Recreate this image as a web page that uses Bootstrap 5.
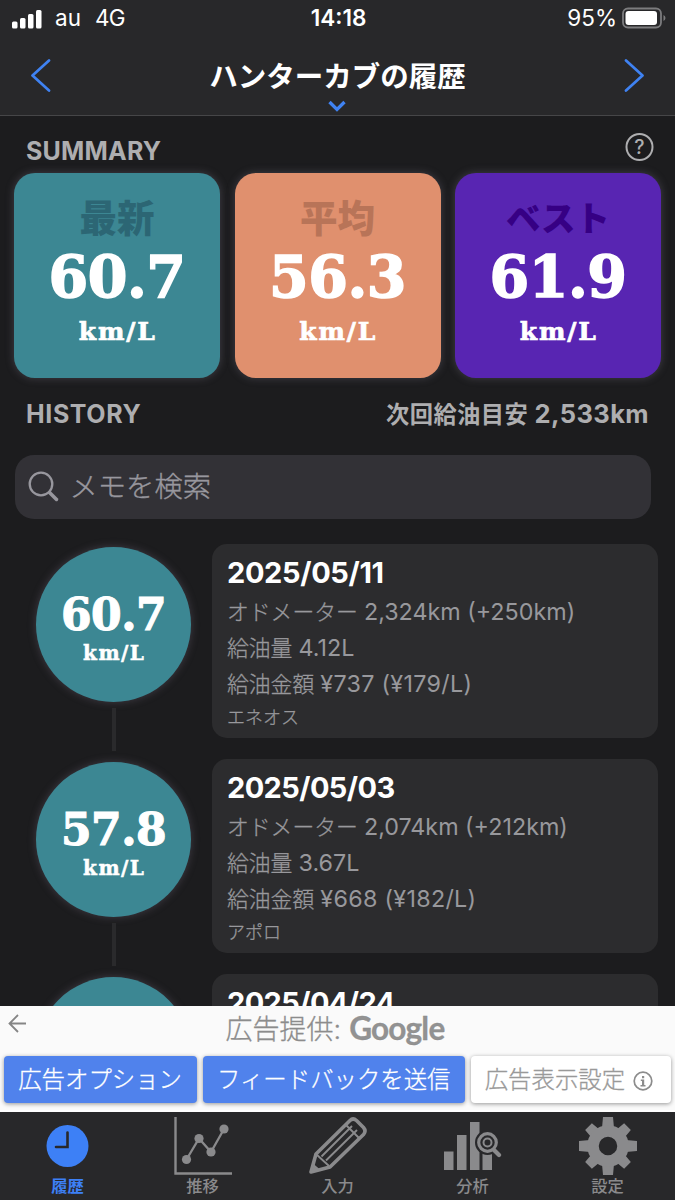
<!DOCTYPE html>
<html lang="ja" data-bs-theme="dark">
<head>
<meta charset="utf-8">
<meta name="viewport" content="width=device-width, initial-scale=1">
<title>ハンターカブの履歴</title>
<link href="https://cdn.jsdelivr.net/npm/bootstrap@5.3.0/dist/css/bootstrap.min.css" rel="stylesheet">
<style>
html, body { height: 1200px; overflow: hidden; }
body { background: #1c1c1e; color: #fff; font-family: Inter, "Noto Sans CJK JP", sans-serif; font-size: 22px; line-height: 1; }
svg { display: block; flex: none; }
.app { height: 1200px; }
.top-bar { height: 116px; background: #28282a; border-bottom: 1px solid #464648; }
.status { height: 37px; padding: 0 10px 0 12px; font-size: 22.5px; }
.status > div { flex: 1 1 0; white-space: nowrap; }
.status .carrier { margin-left: 13px; }
.status .network { margin-left: 14px; letter-spacing: -.8px; }
.title-row { height: 78px; padding: 0 31px; }
.page-title { font-size: 28.5px; font-weight: 700; line-height: 38px; margin: 0; padding-top: 2px; }
.section-head { color: #aeaeb0; font-weight: 700; padding: 0 26px; }
.section-head.first { padding: 16px 21px 0 26px; }
.head-text { font-size: 25px; line-height: 30px; letter-spacing: .2px; margin: 0; color: #aeaeb0; }
.summary { padding: 0 14px; gap: 14.5px; margin-top: 6.5px; }
.tile { flex: 1 1 0; height: 205.5px; border-radius: 21px; box-shadow: 0 0 9px rgba(120,115,130,.42); text-align: center; }
.tile-name { font-size: 37.5px; font-weight: 900; line-height: 46px; padding-top: 23px; }
.tile-name.kana { font-size: 34.5px; }
.slab { font-family: "DejaVu Serif", serif; font-weight: 700; white-space: nowrap; -webkit-text-stroke: 1.1px #fff; }
.tile-num { font-size: 57px; line-height: 58px; letter-spacing: -.4px; margin-top: 6px; -webkit-text-stroke-width: 1.6px; }
.tile-unit { font-size: 25px; line-height: 30px; letter-spacing: 1.9px; margin-top: 11px; padding-left: 1.5px; -webkit-text-stroke-width: .7px; }
.teal { background: #3c8793; } .peach { background: #e0906e; } .violet { background: #5825b2; }
.teal .tile-name { color: #2c6674; } .peach .tile-name { color: #b87458; } .violet .tile-name { color: #360084; }
.search { height: 64.5px; margin: 24.5px 24px 0 14.5px; padding: 0 12px; border-radius: 19px; background: #323136; color: #98979e; font-size: 28.3px; font-weight: 300; -webkit-text-stroke: .35px #98979e; }
.log { flex: 1 1 0; min-height: 0; overflow: hidden; padding: 25px 17px 0 36px; }
.entry { height: 215px; }
.dial-col { width: 155px; padding-top: 3px; }
.dial { width: 155px; height: 155px; border-radius: 50%; text-align: center; box-shadow: 0 0 9px rgba(120,110,130,.4); padding-top: 46px; }
.dial-num { font-size: 44px; line-height: 44px; letter-spacing: -.5px; }
.dial-unit { font-size: 20px; line-height: 24px; letter-spacing: 1.5px; margin-top: 4px; padding-left: 1.5px; -webkit-text-stroke-width: .5px; }
.link-line { width: 4px; height: 43px; background: #2a2a2c; margin-top: 6px; }
.info { width: 446px; height: 193.5px; margin-left: 21px; padding: 9.5px 15px; border-radius: 15px; background: #2c2c2e; color: #98989c; white-space: nowrap; }
.info h3 { font-size: 29px; line-height: 37px; font-weight: 700; color: #fff; margin: 0 0 3px; letter-spacing: -.35px; }
.info p { margin: 0; line-height: 36px; height: 36px; font-size: 21.8px; font-weight: 300; -webkit-text-stroke: .3px #98989c; }
.info .en { font-size: 23.3px; font-weight: 400; -webkit-text-stroke: 0; }
.info .yen { letter-spacing: .3px; }
.info .memo { font-size: 18px; height: 32px; line-height: 32px; }
.ad { height: 106px; background: #fafafa; color: #8c8c8c; border-bottom: 2px solid #fff; position: relative; }
.ad-by { height: 50px; font-size: 27px; font-weight: 300; padding: 0 5px 4px 0; -webkit-text-stroke: .3px #8c8c8c; }
.brand { font-family: Lato, sans-serif; font-weight: 700; font-size: 31.5px; letter-spacing: -.8px; color: #929292; }
.back { position: absolute; left: 8px; top: 8px; }
.ad-row { padding: 0 4px 0 3.5px; gap: 6px; }
.ad-btn { height: 47px; border-radius: 4px; border: 0; padding: 0; font-size: 23.4px; font-weight: 300; line-height: 1; white-space: nowrap; box-shadow: 0 1px 4px rgba(0,0,0,.4); background: #5082ec; color: #fff; -webkit-text-stroke: .3px #fff; }
.ad-btn.plain { background: #fff; color: #999; -webkit-text-stroke-color: #999; padding-right: 4px; }
.tabs { height: 88px; background: #28282a; color: #8a8a8c; }
.tabs a { flex: 1 1 0; color: inherit; text-decoration: none; font-size: 16.3px; font-weight: 500; padding-top: 5px; }
.tabs a.active { color: #3d80f6; font-weight: 700; }
.tabs span { line-height: 20px; margin-top: 1px; }
</style>
</head>
<body>
<div class="app d-flex flex-column">
  <header class="top-bar">
    <div class="status d-flex align-items-center">
      <div class="d-flex align-items-center">
        <svg width="30" height="20" fill="#fff"><rect y="12.5" width="5.5" height="7" rx="1.5"/><rect x="8" y="9" width="5.5" height="10.500" rx="1.500"/><rect x="16" y="5" width="5.5" height="14.500" rx="1.500"/><rect x="24" y="1" width="5.500" height="18.500" rx="1.500"/></svg>
        <span class="carrier">au</span><span class="network">4G</span>
      </div>
      <div class="text-center fw-semibold">14:18</div>
      <div class="d-flex align-items-center justify-content-end"><span>95%</span>
        <svg width="44" height="22" style="margin-left:5px;margin-right:-1px;margin-top:-2px"><rect x="1" y="1.500" width="38" height="19" rx="5" fill="none" stroke="#7c7c7e" stroke-width="1.800"/><rect x="3.500" y="4" width="31.500" height="14" rx="3" fill="#fff"/><path d="M41.500 8v6q2-1 2-3t-2-3z" fill="#7c7c7e"/></svg>
      </div>
    </div>
    <div class="title-row d-flex justify-content-between align-items-center">
      <svg width="20" height="34" fill="none" stroke="#3f82f2" stroke-width="2.700" stroke-linecap="round" stroke-linejoin="round"><path d="M18 1.500 1.500 16.500 18 31.500"/></svg>
      <div class="d-flex flex-column align-items-center pt-3">
        <h1 class="page-title">ハンターカブの履歴</h1>
        <svg width="18" height="12" style="margin-top:4px" fill="none" stroke="#3f82f2" stroke-width="3.300"><path d="M1.500 2 9 9.500 16.500 2"/></svg>
      </div>
      <svg width="20" height="34" fill="none" stroke="#3f82f2" stroke-width="2.700" stroke-linecap="round" stroke-linejoin="round"><path d="M2 1.500 18.500 16.500 2 31.500"/></svg>
    </div>
  </header>

  <div class="section-head first d-flex justify-content-between">
    <h2 class="head-text fw-bold pt-1">SUMMARY</h2>
    <svg width="30" height="30" fill="none" stroke="#aeaeb0"><circle cx="15.500" cy="15" r="13" stroke-width="2"/><text x="15.500" y="22" text-anchor="middle" font-size="19.500" font-weight="500" fill="#aeaeb0" stroke="none">?</text></svg>
  </div>
  <section class="summary d-flex">
    <div class="tile teal"><div class="tile-name">最新</div><div class="slab tile-num">60.7</div><div class="slab tile-unit">km/L</div></div>
    <div class="tile peach"><div class="tile-name">平均</div><div class="slab tile-num">56.3</div><div class="slab tile-unit">km/L</div></div>
    <div class="tile violet"><div class="tile-name kana">ベスト</div><div class="slab tile-num">61.9</div><div class="slab tile-unit">km/L</div></div>
  </section>
  <div class="section-head d-flex justify-content-between" style="padding-top:21px">
    <h2 class="head-text fw-bold" style="letter-spacing:.6px">HISTORY</h2>
    <div class="head-text" style="letter-spacing:.4px"><span style="font-size:23.300px">次回給油目安</span> <span style="font-size:25.500px">2,533km</span></div>
  </div>
  <div class="search d-flex align-items-center">
    <svg width="34" height="34" fill="none" stroke="#98979e" stroke-linecap="round"><circle cx="14" cy="14" r="11.300" stroke-width="2.300"/><path d="M22.500 22.500 29.500 29.500" stroke-width="3.500"/></svg>
    <span style="margin-left:9px">メモを検索</span>
  </div>

  <main class="log">
    <article class="entry d-flex">
      <div class="dial-col d-flex flex-column align-items-center"><div class="dial teal"><div class="slab dial-num">60.7</div><div class="slab dial-unit">km/L</div></div><div class="link-line"></div></div>
      <div class="info"><h3>2025/05/11</h3><p>オドメーター <span class="en">2,324km (+250km)</span></p><p>給油量 <span class="en">4.12L</span></p><p>給油金額 <span class="en yen">¥737 (¥179/L)</span></p><p class="memo">エネオス</p></div>
    </article>
    <article class="entry d-flex">
      <div class="dial-col d-flex flex-column align-items-center"><div class="dial teal"><div class="slab dial-num">57.8</div><div class="slab dial-unit">km/L</div></div><div class="link-line"></div></div>
      <div class="info"><h3 style="letter-spacing:-.6px">2025/05/03</h3><p>オドメーター <span class="en">2,074km (+212km)</span></p><p>給油量 <span class="en">3.67L</span></p><p>給油金額 <span class="en yen">¥668 (¥182/L)</span></p><p class="memo">アポロ</p></div>
    </article>
    <article class="entry d-flex">
      <div class="dial-col"><div class="dial teal"></div></div>
      <div class="info"><h3 style="letter-spacing:-.6px">2025/04/24</h3></div>
    </article>
  </main>

  <aside class="ad">
    <svg class="back" width="20" height="20" fill="none" stroke="#858585" stroke-width="1.800"><path d="M18 9.500H2M10 1 1.500 9.500l8.500 8.500"/></svg>
    <div class="ad-by d-flex justify-content-center align-items-center">広告提供:<span class="brand ms-2">Google</span></div>
    <div class="ad-row d-flex">
      <button class="ad-btn btn" style="width:193.500px">広告オプション</button>
      <button class="ad-btn btn" style="width:262.500px">フィードバックを送信</button>
      <button class="ad-btn plain btn d-flex align-items-center justify-content-center" style="width:200.500px">広告表示設定
        <svg width="20" height="20" style="margin:3px 0 0 8px"><circle cx="10" cy="10" r="8.800" fill="none" stroke="#8c8c8c" stroke-width="1.700"/><path d="M9 5h2.200v2.200H9zM7.800 8.500h3.400v5.500h1.300v1.500H7.500V14H9v-4H7.800z" fill="#8c8c8c"/></svg></button>
    </div>
  </aside>

  <nav class="tabs d-flex">
    <a href="#" class="active d-flex flex-column align-items-center">
      <svg width="58" height="58"><circle cx="28.500" cy="29" r="21" fill="#3d80f6"/><path d="M28.500 15.500V30H17" fill="none" stroke="#28282a" stroke-width="2.600" stroke-linecap="round"/></svg><span>履歴</span></a>
    <a href="#" class="d-flex flex-column align-items-center">
      <svg width="58" height="58" fill="none" stroke="#8a8a8c"><path d="M1.500 0v56.500H58" stroke-width="2.400"/><path d="M12.500 42.500 25 21.500 37 35 50 12" stroke-width="2.300"/><g fill="#8a8a8c" stroke="none"><circle cx="12.500" cy="42.500" r="4.600"/><circle cx="25" cy="21.500" r="4.600"/><circle cx="37" cy="35" r="4.600"/><circle cx="50" cy="12" r="4.600"/></g></svg><span>推移</span></a>
    <a href="#" class="d-flex flex-column align-items-center">
      <svg width="58" height="58" fill="none" stroke="#8a8a8c" stroke-linejoin="round"><path d="M2 55 7 37 41 3.500q3-3 6.500 0l7 7q3 3.500 0 7L21 50z" stroke-width="3.600"/><path d="M7 37 20 49M12.500 39.500 43 9M17 43.500 48 13M37 8 50 21" stroke-width="1.900"/><path d="M3.500 46 11 52.500 2 56z" fill="#8a8a8c" stroke="none"/></svg><span>入力</span></a>
    <a href="#" class="d-flex flex-column align-items-center">
      <svg width="58" height="58" fill="#8a8a8c"><path d="M0 34.500h9.500V53H0zM13 18h9.500v35H13zM26 5h9.500v48H26zM38.500 35h9.500v18h-9.500z"/><g fill="none"><circle cx="43.500" cy="25.500" r="12.500" fill="#28282a"/><path d="m50 33 5 5" stroke="#28282a" stroke-width="7" stroke-linecap="round"/><circle cx="43.500" cy="25.500" r="8.800" stroke="#8a8a8c" stroke-width="3.200"/><path d="m50 33 5 5" stroke="#8a8a8c" stroke-width="4.300" stroke-linecap="round"/><circle cx="43.500" cy="25.500" r="4" stroke="#8a8a8c" stroke-width="2"/></g></svg><span>分析</span></a>
    <a href="#" class="d-flex flex-column align-items-center">
      <svg width="58" height="58" viewBox="-29 -29 58 58"><g fill="#8a8a8c"><g id="t"><path d="M-5-29h10l1 11h-12zM-5 29h10l1-11h-12z"/><path d="M-29-5v10l11 1v-12zM29-5v10l-11 1v-12z"/></g><use href="#t" transform="rotate(45) scale(.95)"/></g><circle r="15" fill="none" stroke="#8a8a8c" stroke-width="11.500"/></svg><span>設定</span></a>
  </nav>
</div>
<script src="https://cdn.jsdelivr.net/npm/bootstrap@5.3.0/dist/js/bootstrap.bundle.min.js"></script>
</body>
</html>
